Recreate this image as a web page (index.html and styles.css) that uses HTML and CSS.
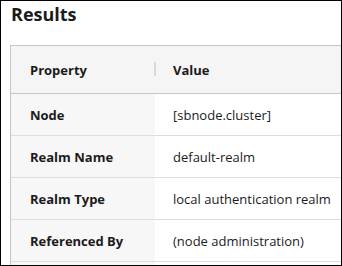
FILE: index.html
```html
<!DOCTYPE html>
<html>
<head>
<meta charset="utf-8">
<link rel="stylesheet" href="styles.css">
</head>
<body>
<div class="frame">
  <h1 class="title">Results</h1>
  <div class="card">
    <div class="row head">
      <div class="cell key">Property<span class="sep"></span></div>
      <div class="cell val">Value</div>
    </div>
    <div class="row">
      <div class="cell key">Node</div>
      <div class="cell val">[sbnode.cluster]</div>
    </div>
    <div class="row">
      <div class="cell key">Realm Name</div>
      <div class="cell val">default-realm</div>
    </div>
    <div class="row">
      <div class="cell key">Realm Type</div>
      <div class="cell val">local authentication realm</div>
    </div>
    <div class="row">
      <div class="cell key">Referenced By</div>
      <div class="cell val">(node administration)</div>
    </div>
    <div class="row">
      <div class="cell key"></div>
      <div class="cell val"></div>
    </div>
  </div>
</div>
</body>
</html>
```

FILE: styles.css
```css
html, body {
  margin: 0;
  padding: 0;
  background: #fff;
}
.frame {
  width: 342px;
  height: 266px;
  box-sizing: border-box;
  border: 1px solid #000;
  overflow: hidden;
  padding-left: 9px;
  font-family: "Open Sans", "Noto Sans", sans-serif;
  color: #1b1b1b;
}
.title {
  margin: 0;
  font-size: 18px;
  font-weight: 700;
  line-height: 26px;
  padding-left: 1px;
}
.card {
  margin-top: 18px;
  border: 1px solid #c6c5cf;
  border-right: none;
  width: 400px;
}
.row {
  display: flex;
  height: 41px;
  border-bottom: 1px solid #dedde6;
}
.row.head {
  height: 47px;
  background: #f5f5f5;
  border-bottom: 1px solid #c6c5cf;
}
.cell {
  display: flex;
  align-items: center;
  font-size: 13px;
  box-sizing: border-box;
}
.key {
  position: relative;
  width: 144px;
  padding-left: 19px;
  font-weight: 700;
  background: #f7f7f8;
}
.head .key {
  background: transparent;
}
.val {
  padding-left: 18px;
  flex: 1;
}
.head .val {
  font-weight: 700;
}
.sep {
  position: absolute;
  right: -1px;
  top: 16px;
  width: 2px;
  height: 14px;
  background: #d9d9d9;
}
```
